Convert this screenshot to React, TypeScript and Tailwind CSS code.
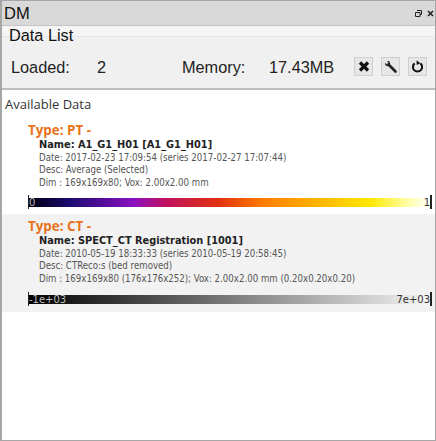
import React from 'react';

interface DataItemProps {
  type: string;
  name: string;
  date: string;
  desc: string;
  dim: string;
  min: string;
  max: string;
  shaded?: boolean;
  barClass: string;
}

const DataItem: React.FC<DataItemProps> = ({ type, name, date, desc, dim, min, max, shaded, barClass }) => {
  return (
    <div className={shaded ? 'bg-[#f2f2f2] pl-[26px] pr-[3px] pt-[3px] pb-[6px]' : 'pl-[26px] pr-[3px] pb-[5px]'}>
      <p className="font-['Open_Sans'] text-[13.4px] leading-[18px] font-bold text-[#e8731a]">{type}</p>
      <div className="pl-[11px] font-['DejaVu_Sans_Condensed','DejaVu_Sans'] text-[9.6px] leading-[12.5px] text-[#555]">
        <p className="font-bold text-[#222] text-[10.9px]">{name}</p>
        <p>{date}</p>
        <p>{desc}</p>
        <p>{dim}</p>
      </div>
      <div className={shaded ? 'mt-[7px] flex items-center h-[14px]' : 'mt-[6px] flex items-center h-[14px]'}>
        <div className="w-[1px] h-[14px] bg-[#222]" />
        <div className={`flex-1 h-[9px] flex items-center justify-between font-['DejaVu_Sans'] text-[10px] leading-[9px] ${barClass}`}>
          <span className="text-[#bbb]">{min}</span>
          <span className="text-[#333]">{max}</span>
        </div>
        <div className="w-[2px] h-[14px] bg-[#222]" />
      </div>
    </div>
  );
};

const App: React.FC = () => {
  return (
    <div className="w-[436px] h-[441px] bg-white border-l-2 border-r border-y border-[#a6a6a6] flex flex-col font-['Liberation_Sans',sans-serif]">
      <div className="h-[25px] shrink-0 bg-[#d9d9d9] border-b border-[#c4c4c4] flex items-center justify-between pl-[2px] pr-[1px]">
        <span className="text-[16.5px] text-[#111]">DM</span>
        <div className="flex items-center gap-[5px]">
          <svg width="7" height="7" viewBox="0 0 7 7" className="text-[#222]">
            <path d="M2 0.5h4.5v4h-1.5M0.5 2.5h4.5v4h-4.5z" fill="none" stroke="currentColor" />
          </svg>
          <svg width="7" height="7" viewBox="0 0 7 7" className="text-[#222]">
            <path d="M1 1l5 5M6 1l-5 5" fill="none" stroke="currentColor" strokeWidth="1.6" />
          </svg>
        </div>
      </div>
      <div className="h-[64px] shrink-0 bg-[linear-gradient(to_bottom,#f5f5f5_10px,#e6e6e6_10px,#e6e6e6_11px,#f0f0f0_11px)] border-b-2 border-[#bdbdbd]">
        <p className="pl-[7px] text-[16.3px] leading-[19px] text-[#111]">Data List</p>
        <div className="flex items-center mt-[12px] h-[19px] pl-[9px] text-[16.3px] text-[#222]">
          <span className="w-[86px] pt-[1px]">Loaded:</span>
          <span className="w-[85px] pt-[1px]">2</span>
          <span className="w-[87px] pt-[1px]">Memory:</span>
          <span className="w-[85px] pt-[1px]">17.43MB</span>
          <div className="flex gap-[8px]">
            <button className="w-[19px] h-[19px] flex items-center justify-center bg-[#e6e6e6] border border-[#cfcfcf]">
              <svg width="12" height="11" viewBox="0 0 12 11" className="text-[#111]">
                <path d="M2 1.5l8 8M10 1.5l-8 8" fill="none" stroke="currentColor" strokeWidth="3.2" />
              </svg>
            </button>
            <button className="w-[19px] h-[19px] flex items-center justify-center bg-[#e6e6e6] border border-[#cfcfcf]">
              <svg width="13" height="13" viewBox="0 0 13 13" className="text-[#222]">
                <path d="M4.5 4.5L11.5 11.5" fill="none" stroke="currentColor" strokeWidth="2.6" strokeLinecap="round" />
                <path d="M1.2 2.8L3 4.6L4.8 3L3 1.2C4.6 0.4 6.5 1.6 6 3.8L5.2 5.6L3.8 6.2C1.8 6.4 0.6 4.6 1.2 2.8Z" fill="currentColor" />
              </svg>
            </button>
            <button className="w-[19px] h-[19px] flex items-center justify-center bg-[#e6e6e6] border border-[#cfcfcf]">
              <svg width="13" height="13" viewBox="0 0 13 13" className="text-[#111]">
                <path d="M3.6 3.4A4.6 4.6 0 1 0 9.4 3.4" fill="none" stroke="currentColor" strokeWidth="2" />
                <path d="M5.6 0.2L9.4 3.2L5.6 5Z" fill="currentColor" />
              </svg>
            </button>
          </div>
        </div>
      </div>
      <p className="font-['Open_Sans'] text-[13px] leading-[17px] text-[#333] pl-[3px] mt-[6px] mb-[8px]">Available Data</p>
      <DataItem
        type="Type: PT -"
        name="Name: A1_G1_H01 [A1_G1_H01]"
        date="Date: 2017-02-23 17:09:54 (series 2017-02-27 17:07:44)"
        desc="Desc: Average (Selected)"
        dim="Dim : 169x169x80; Vox: 2.00x2.00 mm"
        min="0"
        max="1"
        barClass="bg-[linear-gradient(to_right,#000010,#1a0a70_10%,#8a10c0_26%,#c01060_34%,#e03010_47%,#ff8000_59%,#ffb400_72%,#ffe800_85%,#ffffb0_95%,#ffffff)]"
      />
      <DataItem
        shaded
        type="Type: CT -"
        name="Name: SPECT_CT Registration [1001]"
        date="Date: 2010-05-19 18:33:33 (series 2010-05-19 20:58:45)"
        desc="Desc: CTReco:s (bed removed)"
        dim="Dim : 169x169x80 (176x176x252); Vox: 2.00x2.00 mm (0.20x0.20x0.20)"
        min="-1e+03"
        max="7e+03"
        barClass="bg-[linear-gradient(to_right,#000,#f5f5f5)]"
      />
    </div>
  );
};

export default App;
